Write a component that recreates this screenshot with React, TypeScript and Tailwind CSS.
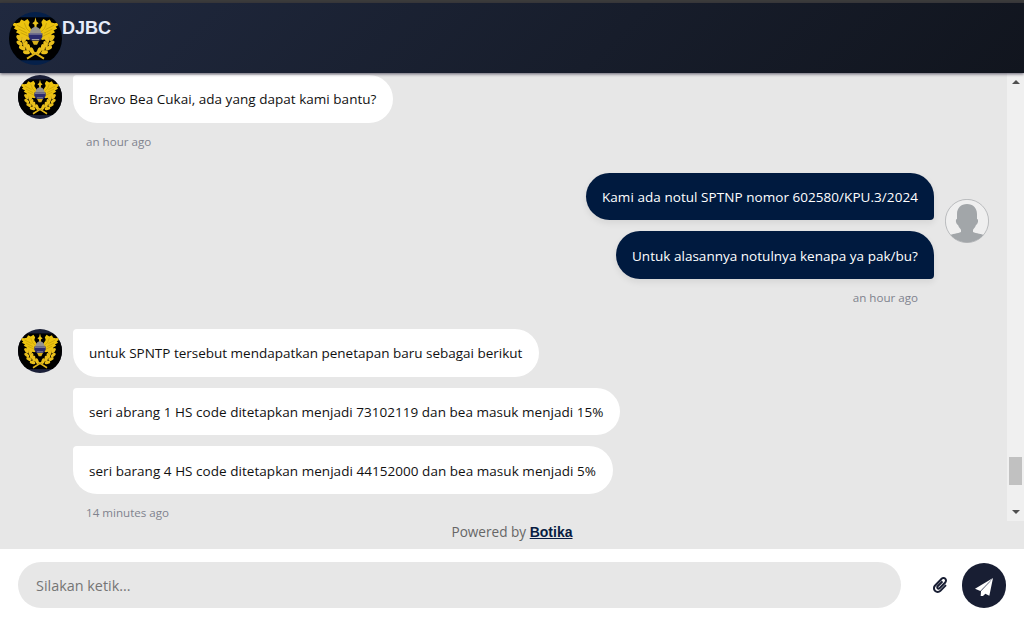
import React from "react";
import { FaPaperclip } from "react-icons/fa";

function Emblem({ rim, size }: { rim: string; size: string }) {
  const leaves = [
    [19, 49, -38],
    [29, 51, 28],
    [20, 59, -52],
    [31, 61, 18],
    [25, 68, -66],
    [36, 67, 2],
    [33, 76, -80],
    [43, 73, -18],
  ];
  const half = (
    <g>
      <path
        d="M7 20 L14 21 L20 20 L23 14 L29 17 L35 13 L39 19 L37 25 L41 31 L43 36 L42 50 L37 53 L30 51 L18 47 L20 42 L13 38 L16 35 L9 31 L12 28 L7 25 Z"
        fill="#ecc30f"
      />
      <path
        d="M15 25 L31 33 M18 32 L34 40 M22 39 L37 46 M29 21 L33 31 L40 38"
        stroke="#b08c08"
        strokeWidth="1"
        fill="none"
      />
      <path d="M24 47 Q26 64 40 72 L66 88" stroke="#dfb51a" strokeWidth="3.6" fill="none" />
      {leaves.map(([x, y, a]) => (
        <ellipse key={`${x}-${y}`} cx={x} cy={y} rx="3.7" ry="6.6" fill="#e9bf1b" transform={`rotate(${a} ${x} ${y})`} />
      ))}
    </g>
  );
  return (
    <svg viewBox="0 0 100 100" className={`shrink-0 rounded-full ${size}`}>
      <rect width="100" height="100" fill={rim} />
      <rect y="10" width="100" height="81" fill="#000" />
      {half}
      <g transform="translate(100 0) scale(-1 1)">{half}</g>
      <path d="M50 10 L52 18 L56 21 L52 24 L52 32 H48 L48 24 L44 21 L48 18 Z" fill="#e9c21c" />
      <path d="M43 54 H57 L53 62 H47 Z" fill="#d9b01a" />
      <path d="M39 42 Q40 29 50 28 Q60 29 61 42 Z" fill="#96948f" />
      <path d="M37 40 H63 V47 L59 54 H41 L37 47 Z" fill="#2b2c6e" />
      <path d="M38 41.5 H62 M43 52 H57" stroke="#9c9aa3" strokeWidth="2" />
    </svg>
  );
}

function UserAvatar() {
  return (
    <svg viewBox="0 0 44 44" className="mt-[26px] ml-[11px] size-11 shrink-0">
      <clipPath id="disc">
        <circle cx="22" cy="22" r="21.5" />
      </clipPath>
      <circle cx="22" cy="22" r="21.6" fill="#efefef" stroke="#a5a8aa" strokeWidth="0.7" />
      <path
        clipPath="url(#disc)"
        fill="#a2a6a9"
        d="M22 5 C28 5 32 9 32 15 V20 C34 20 33 25 31 26 C30 29 28 30 28 31 V33 C31 35 37 34 40 37 V44 H4 V37 C7 34 13 35 16 33 V31 C16 30 14 29 13 26 C11 25 10 20 12 20 V15 C12 9 16 5 22 5 Z"
      />
    </svg>
  );
}

function Bubble({ children, own = false, className }: { children: string; own?: boolean; className: string }) {
  const look = own
    ? "rounded-[24px] rounded-br-[4px] bg-[#001a3f] text-white shadow-[0_3px_7px_rgba(0,0,0,0.08)]"
    : "rounded-[24px] rounded-tl-[4px] bg-white text-[#111]";
  return (
    <div className={`flex items-center px-4 text-[13.5px] whitespace-nowrap ${look} ${className}`}>
      <span>{children}</span>
    </div>
  );
}

export default function App() {
  return (
    <div className="flex h-[618px] w-[1024px] flex-col overflow-hidden bg-[#e7e7e7] font-['Open_Sans','Noto_Sans',sans-serif]">
      <div className="h-[3px] shrink-0 bg-[#3c3c3c]" />
      <header className="z-10 flex h-[70px] shrink-0 bg-linear-135 from-[#20293f] to-[#11151e] pt-[9px] pl-[9px] shadow-[0_1px_3px_rgba(20,15,40,0.65)]">
        <Emblem rim="#05204a" size="size-[53px]" />
        <h1 className="mt-[3px] font-['Liberation_Sans',Arial,sans-serif] text-[18px] leading-[26px] font-bold text-[#e6ecfa]">DJBC</h1>
      </header>

      <div className="flex h-[448px] shrink-0">
        <main className="flex-1 pt-0.5 pl-[18px]">
          <section className="flex h-[98px]">
            <Emblem rim="#1b2038" size="size-11" />
            <div className="ml-[11px]">
              <Bubble className="h-12 w-[320px] tracking-[0.03px]">Bravo Bea Cukai, ada yang dapat kami bantu?</Bubble>
              <p className="mt-2.5 ml-[13px] text-[11.6px] leading-[18px] text-[#80838e]">an hour ago</p>
            </div>
          </section>

          <section className="flex h-[156px] justify-end pr-[18px]">
            <div className="flex flex-col items-end">
              <Bubble own className="h-[47px] w-[348px] pt-0.5 tracking-[0.05px]">Kami ada notul SPTNP nomor 602580/KPU.3/2024</Bubble>
              <Bubble own className="mt-[11px] h-12 w-[318px] pt-0.5 tracking-[0.02px]">Untuk alasannya notulnya kenapa ya pak/bu?</Bubble>
              <p className="mt-2.5 mr-4 text-[11.6px] leading-[18px] text-[#80838e]">an hour ago</p>
            </div>
            <UserAvatar />
          </section>

          <section className="flex">
            <Emblem rim="#1b2038" size="size-11" />
            <div className="ml-[11px]">
              <Bubble className="h-12 w-[466px] tracking-[-0.01px]">untuk SPNTP tersebut mendapatkan penetapan baru sebagai berikut</Bubble>
              <Bubble className="mt-[11px] h-[47px] w-[547px] pt-0.5 tracking-[0.035px]">seri abrang 1 HS code ditetapkan menjadi 73102119 dan bea masuk menjadi 15%</Bubble>
              <Bubble className="mt-[11px] h-12 w-[540px] pt-0.5 tracking-[0.04px]">seri barang 4 HS code ditetapkan menjadi 44152000 dan bea masuk menjadi 5%</Bubble>
              <p className="mt-2.5 ml-[13px] text-[11.6px] leading-[18px] text-[#80838e]">14 minutes ago</p>
            </div>
          </section>
        </main>
        <div className="flex w-[17px] flex-col items-center bg-[#f0f0f0] pt-[7px] pb-[7px]">
          <svg viewBox="0 0 8 4" className="h-1 w-2">
            <path d="M0 4 L4 0 L8 4Z" fill="#505050" />
          </svg>
          <div className="mt-[373px] h-7 w-[13px] bg-[#c1c1c1]" />
          <svg viewBox="0 0 8 4" className="mt-auto h-1 w-2">
            <path d="M0 0 L4 4 L8 0Z" fill="#505050" />
          </svg>
        </div>
      </div>

      <p className="h-7 shrink-0 text-center text-[13.6px] leading-[22px] text-[#666]">
        Powered by{" "}
        <a className="font-['Liberation_Sans',Arial,sans-serif] text-[14px] font-bold text-[#081c42] underline">Botika</a>
      </p>

      <footer className="flex h-[69px] shrink-0 items-start bg-white pt-[13px] pl-[18px]">
        <div className="flex h-[46px] w-[883px] items-center rounded-full bg-[#e7e7e7] px-[18px] pt-0.5 text-[14.4px] text-[#757575]">
          <span>Silakan ketik...</span>
        </div>
        <FaPaperclip className="mt-[15px] ml-[31px] size-4 text-[#181e33]" />
        <button className="mt-px ml-3.5 flex h-[45px] w-11 items-center justify-center rounded-full bg-[#181e33] text-white">
          <svg viewBox="0 0 54 54" className="mt-0.5 size-[18px]" fill="currentColor">
            <path d="M0 32 L54 0 L16 39 Z" />
            <path d="M54 0 L43 53 L31 47 L24 54 L17 54 L18 39 Z" />
            <path d="M46 10 L18 39" stroke="#59607a" strokeWidth="1.5" />
          </svg>
        </button>
      </footer>
    </div>
  );
}
